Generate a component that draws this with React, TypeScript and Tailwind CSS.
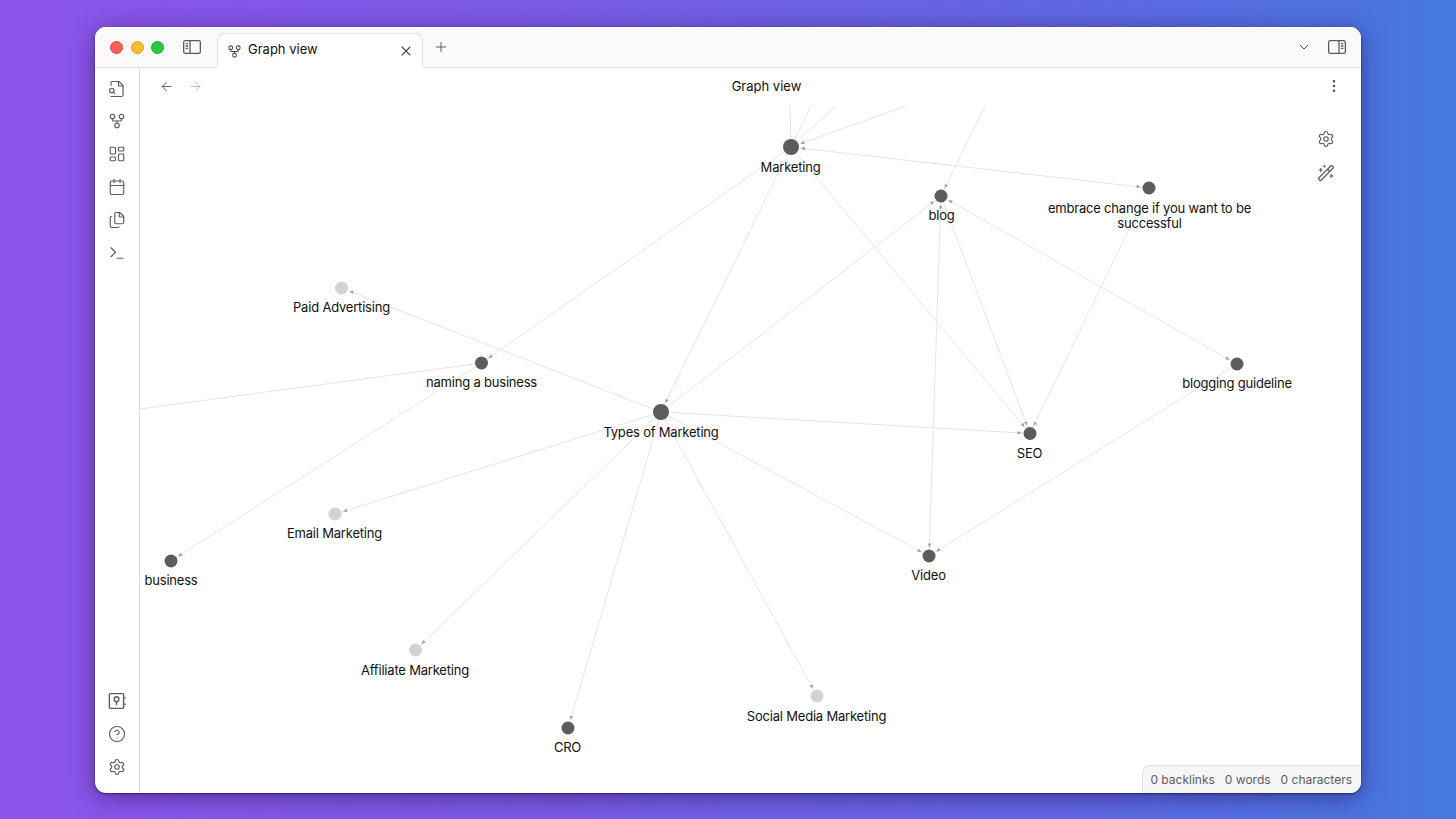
import React from "react";
import {
  ArrowLeft, ArrowRight, Calendar, ChevronDown, CircleHelp, EllipsisVertical, Files,
  GitFork, LayoutDashboard, Plus, Settings, Terminal, WandSparkles, X,
} from "lucide-react";

type N = { x: number; y: number; r: number; light?: boolean };
const nodes: Record<string, N> = {
  marketing: { x: 791, y: 147, r: 8 },
  blog: { x: 941, y: 196, r: 6.5 },
  embrace: { x: 1149, y: 188, r: 6.5 },
  paid: { x: 341.5, y: 288, r: 6.5, light: true },
  naming: { x: 481.5, y: 363, r: 6.5 },
  types: { x: 661, y: 412, r: 8 },
  seo: { x: 1030, y: 433.5, r: 6.5 },
  blogging: { x: 1237, y: 364, r: 6.5 },
  email: { x: 335, y: 514, r: 6.5, light: true },
  business: { x: 171, y: 561, r: 6.5 },
  video: { x: 929, y: 556, r: 6.5 },
  affiliate: { x: 415.5, y: 650, r: 6.5, light: true },
  social: { x: 817, y: 696, r: 6.5, light: true },
  cro: { x: 568, y: 728, r: 6.5 },
};

// Each line is drawn once; an arrow head sits at the "to" end
const lines: [string, string][] = [
  ["marketing", "naming"], ["marketing", "types"], ["marketing", "seo"], ["marketing", "embrace"],
  ["embrace", "seo"], ["types", "blog"], ["blog", "video"], ["blog", "seo"], ["blog", "blogging"],
  ["blogging", "video"], ["types", "paid"], ["types", "email"], ["types", "affiliate"], ["types", "cro"],
  ["types", "social"], ["types", "video"], ["types", "seo"], ["naming", "business"],
];
const extraHeads: [string, string][] = [["embrace", "marketing"], ["video", "blog"], ["blogging", "blog"]];

const outer: [number, number, string][] = [
  [790, 106, "marketing"], [811, 106, "marketing"], [836, 106, "marketing"], [906, 106, "marketing"], [985, 106, "blog"],
];

function arrow(fx: number, fy: number, t: N) {
  const dx = fx - t.x, dy = fy - t.y;
  const l = Math.hypot(dx, dy);
  const ux = dx / l, uy = dy / l;
  const tip = t.r + 2;
  const tx = t.x + ux * tip, ty = t.y + uy * tip;
  const bx = tx + ux * 4, by = ty + uy * 4;
  const px = -uy * 1.8, py = ux * 1.8;
  return `${tx},${ty} ${bx + px},${by + py} ${bx - px},${by - py}`;
}

function SideLeft({ right = false }: { right?: boolean }) {
  return (
    <svg width="20" height="16" viewBox="0 0 20 16" fill="none" stroke="#5c5c5c" strokeWidth="1.3" className={right ? "-scale-x-100" : ""}>
      <rect x="1.65" y="1.65" width="16.7" height="12.7" rx="1.6" />
      <path d="M8 1.65v12.7" />
      <path d="M3.6 4.6h2.4M3.6 7h2.4M3.6 9.4h2.4" />
    </svg>
  );
}

function VaultIcon() {
  return (
    <svg width="18" height="18" viewBox="0 0 18 18" fill="none" stroke="#5c5c5c" strokeWidth="1.4">
      <rect x="1.4" y="1.6" width="14.2" height="14.8" rx="1" />
      <circle cx="8.5" cy="7.2" r="2.4" />
      <path d="M8.5 9.6v3.6M17 5v1.6M17 11.4V13" />
    </svg>
  );
}

function QuickSwitch() {
  return (
    <svg width="18" height="18" viewBox="0 0 24 24" fill="none" stroke="currentColor" strokeWidth="1.6" strokeLinecap="round" strokeLinejoin="round" className="mt-[1px] mb-[-1px]">
      <path d="M4 22h14a2 2 0 0 0 2-2V7.5L14.5 2H6a2 2 0 0 0-2 2v3" />
      <path d="M14 2v6h6" />
      <circle cx="5" cy="14" r="3" />
      <path d="m9 18-1.8-1.8" />
    </svg>
  );
}

const labels = [
  { t: "Marketing", c: "left-[650.5px] top-[53px]" },
  { t: "blog", c: "left-[801.5px] top-[101px]" },
  { t: "Paid Advertising", c: "left-[201.5px] top-[193px]" },
  { t: "naming a business", c: "left-[341.5px] top-[268px]" },
  { t: "Types of Marketing", c: "left-[521px] top-[318px]" },
  { t: "SEO", c: "left-[889.5px] top-[338.5px]" },
  { t: "blogging guideline", c: "left-[1097px] top-[269px]" },
  { t: "Email Marketing", c: "left-[194.5px] top-[419px]" },
  { t: "business", c: "left-[31px] top-[466px]" },
  { t: "Video", c: "left-[788.5px] top-[461px]" },
  { t: "Affiliate Marketing", c: "left-[275px] top-[555.5px]" },
  { t: "Social Media Marketing", c: "left-[676.5px] top-[601.5px]" },
  { t: "CRO", c: "left-[427.5px] top-[633px]" },
];

const ribbonTop = [GitFork, LayoutDashboard, Calendar, Files, Terminal];

export default function App() {
  return (
    <div className="w-[1456px] h-[819px] overflow-hidden bg-[linear-gradient(90deg,#8d55ec_0%,#7c5ae6_35%,#5f68e4_75%,#4578e0_100%)] pt-[27px] pl-[95px] font-['Inter','Liberation_Sans',sans-serif]">
      <div className="w-[1266px] h-[766px] rounded-[11px] bg-white overflow-hidden flex flex-col shadow-[0_1px_2px_rgba(20,10,50,0.6),0_4px_24px_rgba(30,10,70,0.5)]">
        {/* title bar */}
        <div className="h-[41px] shrink-0 flex bg-[#fafafa] border-b border-[#e2e2e2] relative">
          <div className="flex items-center gap-[7.5px] pl-[15px] h-[40px]">
            <span className="w-[13px] h-[13px] rounded-full bg-[#ff5f57] border border-[#e2463f]" />
            <span className="w-[13px] h-[13px] rounded-full bg-[#febc2e] border border-[#e1a128]" />
            <span className="w-[13px] h-[13px] rounded-full bg-[#28c840] border border-[#1fad30]" />
          </div>
          <div className="ml-[18px] h-[40px] flex items-center">
            <SideLeft />
          </div>
          <div className="relative ml-[15px] mt-[6px] w-[206px] h-[35px] bg-white border border-b-0 border-[#e2e2e2] rounded-t-[8px] flex items-center pl-[9px] pr-[8px] z-10">
            <GitFork size={15} strokeWidth={1.7} color="#4a4a4a" />
            <span className="ml-[6px] mb-[2px] text-[13px] text-[#111111] flex-1">Graph view</span>
            <X size={16} strokeWidth={1.6} color="#4a4a4a" />
            <span className="absolute left-[-6px] bottom-0 w-[6px] h-[6px] bg-[radial-gradient(circle_at_0_0,transparent_5.5px,#e2e2e2_5.5px,#e2e2e2_6.5px,#ffffff_6.5px)]" />
            <span className="absolute right-[-6px] bottom-0 w-[6px] h-[6px] bg-[radial-gradient(circle_at_100%_0,transparent_5.5px,#e2e2e2_5.5px,#e2e2e2_6.5px,#ffffff_6.5px)]" />
          </div>
          <div className="ml-[10px] h-[40px] flex items-center">
            <Plus size={16} strokeWidth={1.5} color="#5c5c5c" />
          </div>
          <div className="ml-auto h-[40px] flex items-center gap-[15px] pr-[14px]">
            <ChevronDown size={16} strokeWidth={1.5} color="#4a4a4a" />
            <SideLeft right />
          </div>
        </div>

        <div className="flex-1 flex min-h-0">
          {/* ribbon */}
          <div className="w-[45px] shrink-0 border-r border-[#dedede] flex flex-col items-center pt-[11px] pb-[17px] pr-[1px] text-[#5c5c5c]">
            <div className="flex flex-col gap-[15px]">
              <QuickSwitch />
              {ribbonTop.map((I, i) => (
                <I key={i} size={18} strokeWidth={1.55} />
              ))}
            </div>
            <div className="mt-auto flex flex-col gap-[15px] items-center">
              <VaultIcon />
              <CircleHelp size={18} strokeWidth={1.55} />
              <Settings size={18} strokeWidth={1.55} />
            </div>
          </div>

          {/* main */}
          <div className="flex-1 flex flex-col min-w-0 relative">
            <div className="h-[38px] shrink-0 flex items-center pl-[19px] pr-[19px]">
              <ArrowLeft size={15} strokeWidth={1.5} color="#5c5c5c" className="mb-[2px]" />
              <ArrowRight size={15} strokeWidth={1.5} color="#b5b5b5" className="ml-[14px] mb-[2px]" />
              <span className="flex-1 text-center text-[13px] text-[#111111] pl-[4px]">Graph view</span>
              <EllipsisVertical size={16} strokeWidth={1.7} color="#4a4a4a" className="mb-[2px]" />
            </div>
            <div className="flex-1 relative min-h-0">
              <svg className="absolute inset-0 w-full h-full" viewBox="140 106 1221 687">
                {lines.map(([a, b], i) => (
                  <line key={i} x1={nodes[a].x} y1={nodes[a].y} x2={nodes[b].x} y2={nodes[b].y} stroke="#e6e6e6" strokeWidth="1" />
                ))}
                <line x1="140" y1="409" x2={nodes.naming.x} y2={nodes.naming.y} stroke="#e6e6e6" strokeWidth="1" />
                {outer.map(([x, y, n], i) => (
                  <line key={i} x1={x} y1={y} x2={nodes[n].x} y2={nodes[n].y} stroke="#e6e6e6" strokeWidth="1" />
                ))}
                {[...lines, ...extraHeads].map(([a, b], i) => (
                  <polygon key={i} points={arrow(nodes[a].x, nodes[a].y, nodes[b])} fill="#a0a0a0" />
                ))}
                {outer.slice(3).map(([x, y, n], i) => (
                  <polygon key={i} points={arrow(x, y, nodes[n])} fill="#a0a0a0" />
                ))}
                {Object.entries(nodes).map(([k, n]) => (
                  <circle key={k} cx={n.x} cy={n.y} r={n.r} fill={n.light ? "#d2d2d2" : "#5c5c5c"} />
                ))}
              </svg>
              {labels.map((l) => (
                <div key={l.t} className={`absolute -translate-x-1/2 whitespace-nowrap text-[13px] tracking-[-0.2px] leading-[16px] text-[#111111] ${l.c}`}>
                  {l.t}
                </div>
              ))}
              <div className="absolute left-[1009.5px] top-[94.5px] -translate-x-1/2 w-[240px] text-center text-[13px] tracking-[-0.2px] leading-[15px] text-[#111111]">
                embrace change if you want to be successful
              </div>
              <div className="absolute right-[26px] top-[24px] flex flex-col gap-[16px] text-[#5c5c5c]">
                <Settings size={18} strokeWidth={1.55} />
                <WandSparkles size={18} strokeWidth={1.55} />
              </div>
              <div className="absolute right-0 bottom-0 h-[28px] w-[219px] bg-[#f6f6f6] border-l border-t border-[#e2e2e2] rounded-tl-[8px] flex items-center justify-end gap-[10px] pr-[9px] text-[12px] text-[#5c5c5c]">
                <span>0 backlinks</span>
                <span>0 words</span>
                <span>0 characters</span>
              </div>
            </div>
          </div>
        </div>
      </div>
    </div>
  );
}
